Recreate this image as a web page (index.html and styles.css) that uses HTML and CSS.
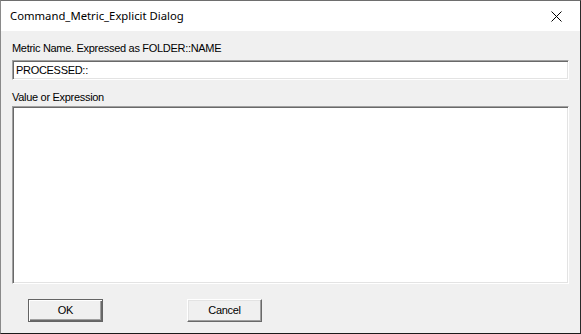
FILE: index.html
```html
<!DOCTYPE html>
<html>
<head>
<meta charset="utf-8">
<link rel="stylesheet" href="styles.css">
</head>
<body>
<div class="window">
  <div class="titlebar">
    <div class="title">Command_Metric_Explicit Dialog</div>
    <div class="close">
      <svg width="11" height="11" viewBox="0 0 11 11"><path d="M0.5 0.5 L10.5 10.5 M10.5 0.5 L0.5 10.5" stroke="#000" stroke-width="1" fill="none"/></svg>
    </div>
  </div>
  <div class="client">
    <div class="label first">Metric Name. Expressed as FOLDER::NAME</div>
    <div class="field">PROCESSED::</div>
    <div class="label second">Value or Expression</div>
    <div class="area"></div>
    <div class="buttons">
      <div class="btn default"><span>OK</span></div>
      <div class="btn cancel"><span>Cancel</span></div>
    </div>
  </div>
</div>
</body>
</html>
```
FILE: styles.css
```css
html, body {
  margin: 0;
  padding: 0;
  background: #f0f0f0;
}
.window {
  width: 581px;
  height: 334px;
  box-sizing: border-box;
  border: 1px solid;
  border-color: #6e6e6e #2a2a2a #1a1a1a #8a8a8a;
  background: #f0f0f0;
  display: flex;
  flex-direction: column;
  font-family: "Liberation Sans", Arial, sans-serif;
  font-size: 11px;
  letter-spacing: -0.3px;
  color: #000;
}
.titlebar {
  height: 30px;
  background: #fff;
  display: flex;
  align-items: center;
  flex: none;
}
.title {
  flex: 1;
  padding-left: 9px;
  font-family: "Noto Sans", sans-serif;
  font-size: 11.3px;
  letter-spacing: 0;
  line-height: 16px;
  margin-top: -1px;
}
.close {
  width: 46px;
  height: 30px;
  display: flex;
  align-items: center;
  justify-content: center;
  margin-right: 1px;
}
.client {
  flex: 1;
  padding: 0 11px;
  display: flex;
  flex-direction: column;
}
.label {
  line-height: 13px;
  height: 13px;
  white-space: nowrap;
}
.label.first { margin-top: 11px; }
.label.second { margin-top: 11px; }
.field, .area {
  box-sizing: border-box;
  background: #fff;
  border: 1px solid;
  border-color: #a0a0a0 #fff #fff #a0a0a0;
  box-shadow: inset 1px 1px 0 #696969, inset -1px -1px 0 #e3e3e3;
}
.field {
  margin-top: 5px;
  height: 20px;
  line-height: 18px;
  padding-left: 3px;
}
.area {
  margin-top: 2px;
  height: 178px;
}
.buttons {
  margin-top: 15px;
  display: flex;
  padding-left: 16px;
  gap: 84px;
}
.btn {
  box-sizing: border-box;
  width: 75px;
  height: 23px;
  display: flex;
  align-items: center;
  justify-content: center;
  background: #f0f0f0;
}
.btn.cancel {
  border: 1px solid;
  border-color: #fff #696969 #696969 #fff;
  box-shadow: inset -1px -1px 0 #a0a0a0, inset 1px 1px 0 #e3e3e3;
}
.btn.default {
  border: 1px solid #646464;
  box-shadow: inset 1px 1px 0 #fff, inset -1px -1px 0 #696969, inset -2px -2px 0 #a0a0a0;
}
.btn span {
  line-height: 13px;
}
```
